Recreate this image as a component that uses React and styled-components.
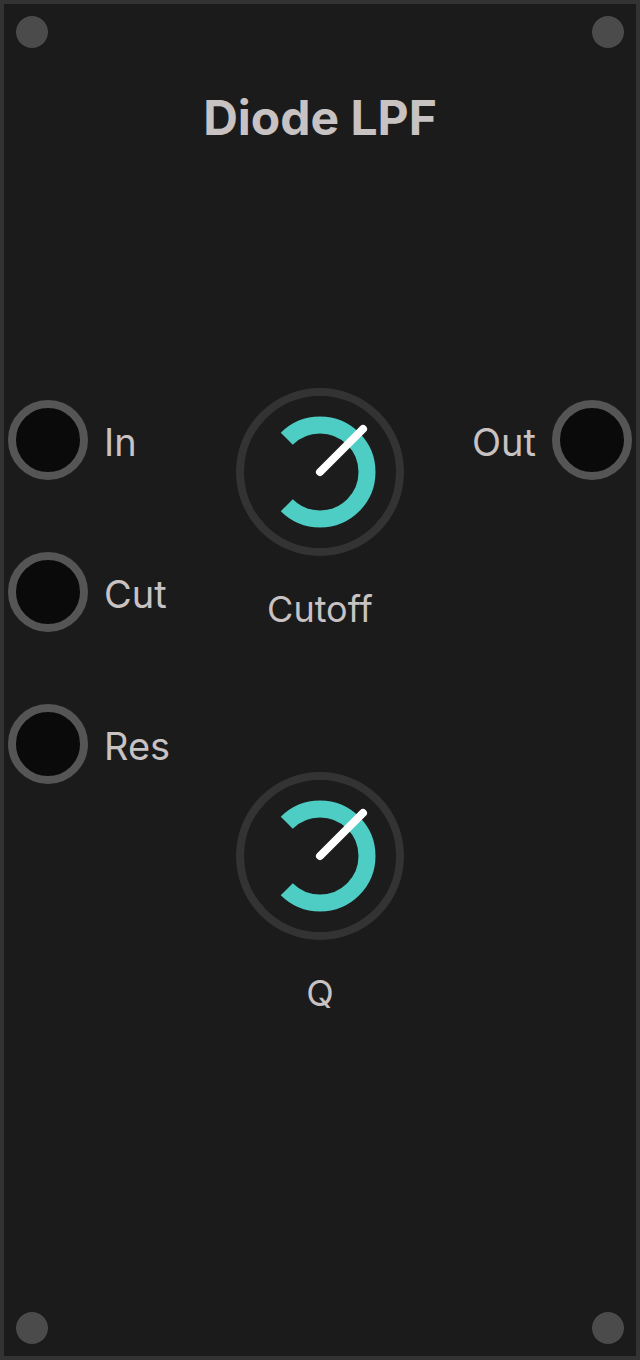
import React from 'react';
import styled, { createGlobalStyle } from 'styled-components';

const GlobalStyle = createGlobalStyle`
  html, body {
    margin: 0;
    padding: 0;
    background: #1b1b1b;
  }
  * {
    box-sizing: border-box;
  }
`;

const Panel = styled.div`
  width: 640px;
  height: 1360px;
  border: 4px solid #333333;
  background: #1b1b1b;
  display: flex;
  flex-direction: column;
  font-family: Inter, "Noto Sans", sans-serif;
  color: #c8c2c2;
`;

const ScrewRow = styled.div`
  display: flex;
  justify-content: space-between;
  padding: ${(p) => (p.bottom ? '0 12px 12px' : '12px 12px 0')};
`;

const Screw = styled.div`
  width: 32px;
  height: 32px;
  border-radius: 50%;
  background: #4b4b4b;
`;

const Title = styled.h1`
  margin: 46px 0 0;
  font-size: 48px;
  line-height: 1;
  font-weight: 700;
  text-align: center;
`;

const Body = styled.div`
  margin-top: 246px;
  display: grid;
  grid-template-columns: 1fr auto 1fr;
  align-items: start;
`;

const JackColumn = styled.div`
  display: flex;
  flex-direction: column;
  align-items: ${(p) => (p.right ? 'flex-end' : 'flex-start')};
  gap: 72px;
  padding: 12px 4px 0;
`;

const JackRow = styled.div`
  display: flex;
  align-items: center;
  gap: 16px;
`;

const Jack = styled.div`
  width: 80px;
  height: 80px;
  border-radius: 50%;
  border: 8px solid #555555;
  background: #0a0a0a;
`;

const JackLabel = styled.span`
  font-size: 38px;
  line-height: 1;
  padding-top: 3px;
`;

const KnobColumn = styled.div`
  display: flex;
  flex-direction: column;
  align-items: center;
`;

const KnobLabel = styled.div`
  margin-top: 35px;
  margin-bottom: ${(p) => (p.last ? '0' : '145px')};
  font-size: 36px;
  line-height: 1;
`;

const KnobSvg = styled.svg`
  display: block;
  width: 168px;
  height: 168px;
`;

const Knob = () => {
  const c = 84;
  const r = 47;
  const d = r * Math.SQRT1_2;
  return (
    <KnobSvg viewBox="0 0 168 168">
      <circle cx={c} cy={c} r={80} fill="#1c1c1c" stroke="#333333" strokeWidth={8} />
      <path
        d={`M ${c - d} ${c - d} A ${r} ${r} 0 1 1 ${c - d} ${c + d}`}
        fill="none"
        stroke="#4ecdc4"
        strokeWidth={17}
      />
      <line x1={c} y1={c} x2={c + 43} y2={c - 43} stroke="#ffffff" strokeWidth={8} strokeLinecap="round" />
    </KnobSvg>
  );
};

const inputs = ['In', 'Cut', 'Res'];
const knobs = ['Cutoff', 'Q'];

export default function App() {
  return (
    <>
      <GlobalStyle />
      <Panel>
        <ScrewRow>
          <Screw />
          <Screw />
        </ScrewRow>
        <Title>Diode LPF</Title>
        <Body>
          <JackColumn>
            {inputs.map((name) => (
              <JackRow key={name}>
                <Jack />
                <JackLabel>{name}</JackLabel>
              </JackRow>
            ))}
          </JackColumn>
          <KnobColumn>
            {knobs.map((name, i) => (
              <React.Fragment key={name}>
                <Knob />
                <KnobLabel last={i === knobs.length - 1}>{name}</KnobLabel>
              </React.Fragment>
            ))}
          </KnobColumn>
          <JackColumn right>
            <JackRow>
              <JackLabel>Out</JackLabel>
              <Jack />
            </JackRow>
          </JackColumn>
        </Body>
        <div style={{ flex: 1 }} />
        <ScrewRow bottom>
          <Screw />
          <Screw />
        </ScrewRow>
      </Panel>
    </>
  );
}
